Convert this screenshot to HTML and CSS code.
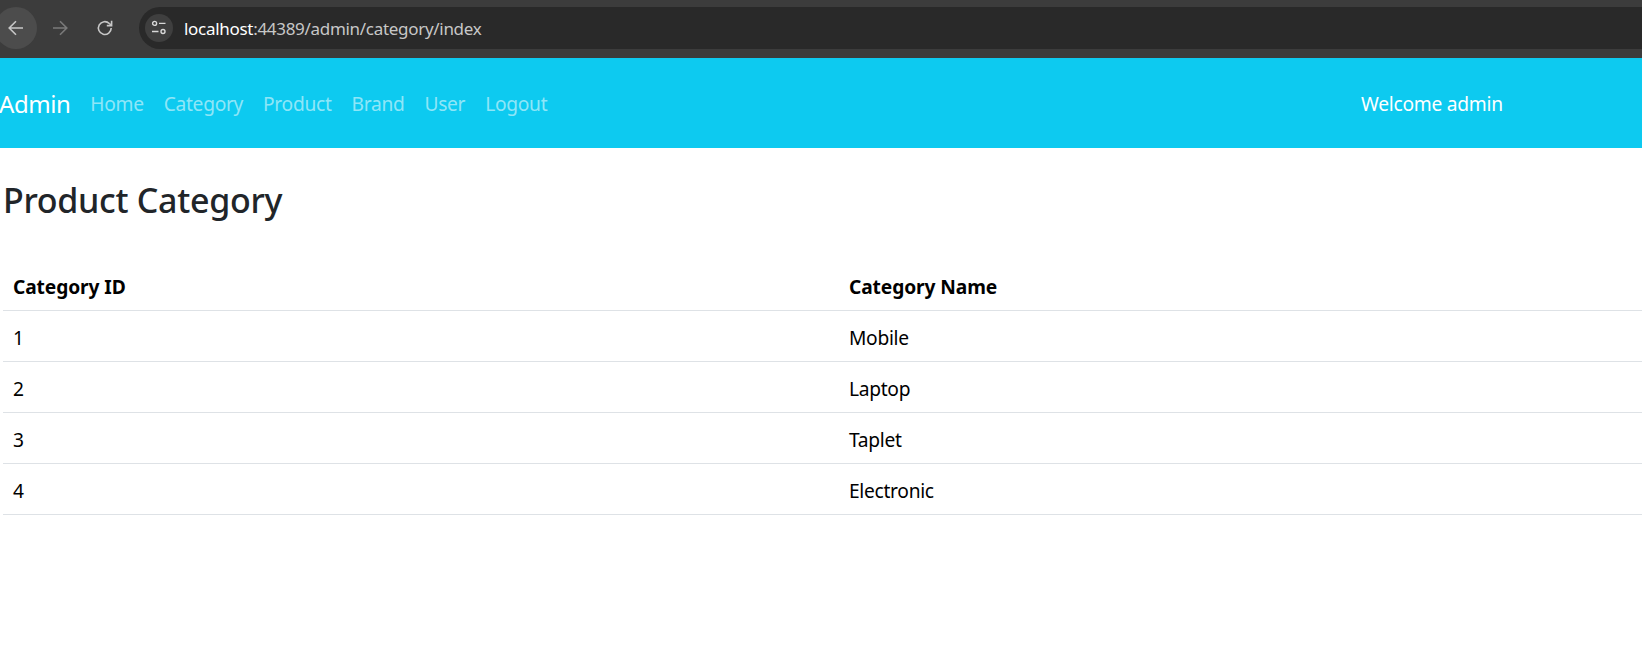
FILE: index.html
```html
<!DOCTYPE html>
<html lang="en">
<head>
<meta charset="utf-8">
<title>Product Category</title>
<link rel="stylesheet" href="styles.css">
</head>
<body>
<div class="chrome">
  <div class="chrome-btn back">
    <svg width="20" height="20" viewBox="0 0 20 20" fill="none" stroke="#c7c7c7" stroke-width="1.6"><path d="M17 10H3.5M10 3.2 3.2 10l6.8 6.8"/></svg>
  </div>
  <div class="chrome-btn">
    <svg width="20" height="20" viewBox="0 0 20 20" fill="none" stroke="#7a7a7a" stroke-width="1.6"><path d="M3 10h13.5M10 3.2l6.8 6.8-6.8 6.8"/></svg>
  </div>
  <div class="chrome-btn">
    <svg width="20" height="20" viewBox="0 0 20 20" fill="none" stroke="#c7c7c7" stroke-width="1.6"><path d="M16.2 10a6.4 6.4 0 1 1-1.9-4.5l1.9 1.7"/><path d="M16.6 2.8v4.8h-4.8"/></svg>
  </div>
  <div class="omnibox">
    <span class="tune">
      <svg width="16" height="16" viewBox="0 0 16 16" fill="none" stroke="#d8d8d8" stroke-width="1.4"><circle cx="3.6" cy="3.4" r="2"/><path d="M8 3.4h6.5M1 11.5h6.5"/><circle cx="12" cy="11.5" r="2"/></svg>
    </span>
    <span class="url"><span class="host">localhost</span>:44389/admin/category/index</span>
  </div>
</div>
<nav class="navbar">
  <a class="brand" href="#">Admin</a>
  <a class="nav-link" href="#">Home</a>
  <a class="nav-link" href="#">Category</a>
  <a class="nav-link" href="#">Product</a>
  <a class="nav-link" href="#">Brand</a>
  <a class="nav-link" href="#">User</a>
  <a class="nav-link" href="#">Logout</a>
  <span class="welcome">Welcome admin</span>
</nav>
<main class="content">
  <h2 class="title">Product Category</h2>
  <table class="table">
    <thead>
      <tr><th>Category ID</th><th>Category Name</th></tr>
    </thead>
    <tbody>
      <tr><td>1</td><td>Mobile</td></tr>
      <tr><td>2</td><td>Laptop</td></tr>
      <tr><td>3</td><td>Taplet</td></tr>
      <tr><td>4</td><td>Electronic</td></tr>
    </tbody>
  </table>
</main>
</body>
</html>
```
FILE: styles.css
```css
* { box-sizing: border-box; }
html, body { margin: 0; padding: 0; height: 100%; overflow: hidden; background: #fff; }
body { font-family: "Noto Sans", "Open Sans", sans-serif; font-size: 19px; color: #000; width: 1642px; }
.chrome { height: 58px; background: #3c3c3c; display: flex; align-items: center; padding-bottom: 2px; }
.chrome-btn { width: 36px; height: 42px; flex: none; display: flex; align-items: center; justify-content: center; }
.chrome-btn + .chrome-btn { margin-left: 9px; }
.chrome-btn.back { width: 42px; margin-left: -5px; border-radius: 50%; background: #4c4c4c; }
.chrome-btn.back + .chrome-btn { margin-left: 5px; }
.omnibox { flex: 1; height: 42px; margin-left: 16px; margin-right: -30px; background: #292929; border-radius: 21px; display: flex; align-items: center; padding-left: 6px; }
.tune { width: 28px; height: 28px; border-radius: 50%; background: #3f3f3f; display: flex; align-items: center; justify-content: center; }
.url { margin-left: 11px; font-size: 17px; color: #c7c7c7; letter-spacing: -0.3px; }
.host { color: #fff; }
.navbar { height: 90px; background: #0dcaf0; display: flex; align-items: center; padding-top: 1px; }
.navbar a { text-decoration: none; }
.brand { color: #fff; font-size: 24px; letter-spacing: -0.45px; margin-left: -1px; margin-right: 20px; }
.nav-link { color: rgba(255,255,255,0.55); font-size: 19.2px; letter-spacing: -0.3px; margin-right: 20px; }
.welcome { color: #fff; font-size: 19.2px; letter-spacing: -0.25px; position: absolute; left: 1361px; }
.content { padding: 0 3px; }
.title { margin: 32px 0 39px 0; font-size: 34px; font-weight: 500; line-height: 1.2; color: #212529; letter-spacing: -0.3px; }
.table { border-collapse: collapse; width: 1672px; table-layout: fixed; }
.table th, .table td { text-align: left; padding: 12.5px 10px 8.5px; height: 51px; border-bottom: 1px solid #dee2e6; font-size: 19.2px; letter-spacing: -0.3px; line-height: 28px; }
.table th { font-weight: 700; letter-spacing: -0.1px; }
```
